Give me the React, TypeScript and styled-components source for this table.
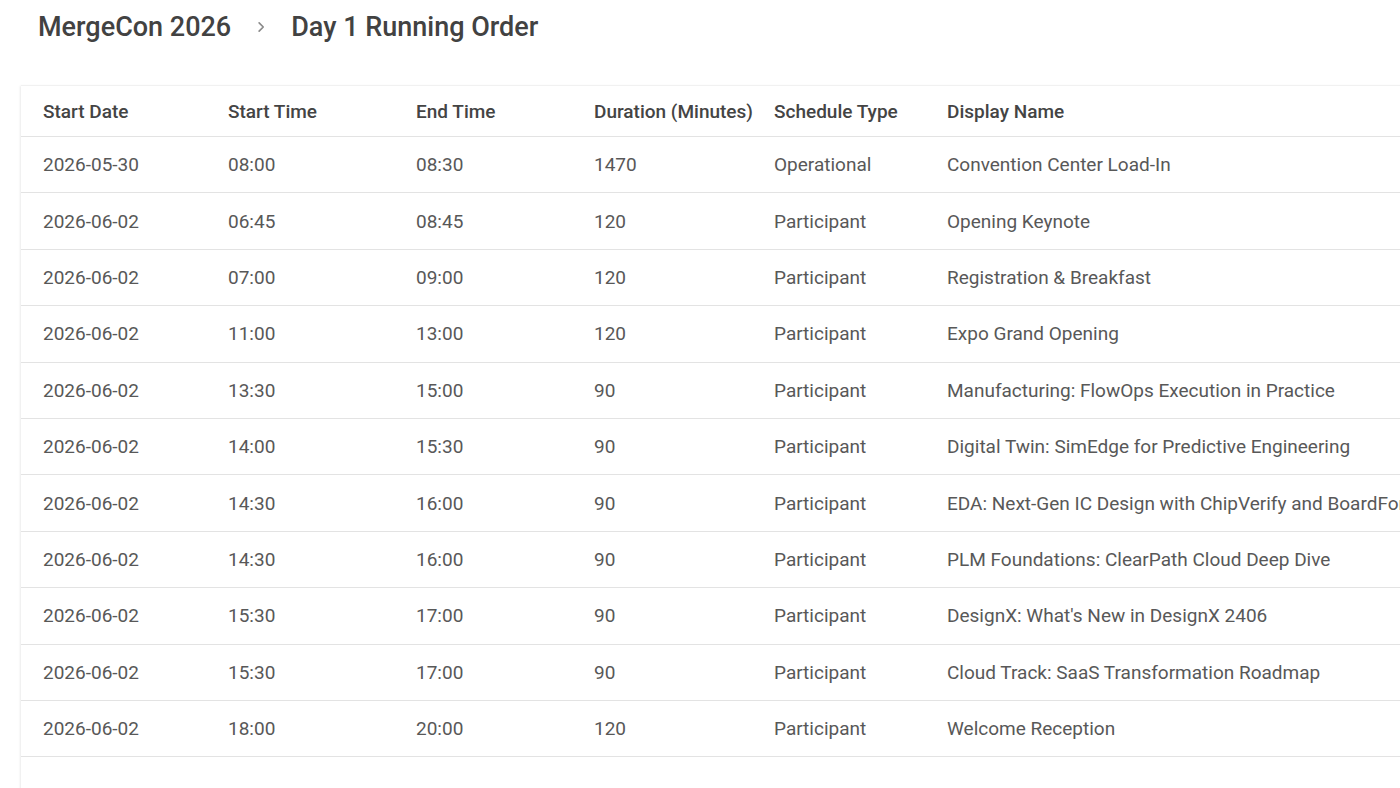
import React from "react";
import styled, { createGlobalStyle } from "styled-components";

const GlobalStyle = createGlobalStyle`
  html, body { margin: 0; padding: 0; background: #ffffff; overflow: hidden; }
  body { font-family: Roboto, "Noto Sans", Arial, sans-serif; }
`;

const Page = styled.div`
  width: 1400px;
  height: 788px;
  overflow: hidden;
  background: #ffffff;
`;

const Breadcrumbs = styled.nav`
  display: flex;
  align-items: center;
  height: 54px;
  padding-left: 38px;
  color: #424242;
  font-size: 27px;
  font-weight: 500;
`;

const Crumb = styled.span`
  letter-spacing: 0;
`;

const Sep = styled.span`
  display: inline-flex;
  width: 60px;
  justify-content: center;
  color: #8a8a8a;
  svg { display: block; }
`;

const Card = styled.div`
  margin: 32px 0 0 21px;
  width: 1500px;
  background: #fff;
  box-shadow: -1px 0 2px rgba(0, 0, 0, 0.08), 0 -1px 1px rgba(0, 0, 0, 0.03);
`;

const Table = styled.table`
  border-collapse: collapse;
  table-layout: fixed;
  width: 100%;
`;

const HeadCell = styled.th`
  height: 50px;
  padding: 0 0 0 22px;
  text-align: left;
  font-size: 19px;
  font-weight: 500;
  color: #444444;
  border-bottom: 1px solid #e3e3e3;
  white-space: nowrap;
`;

const Row = styled.tr`
  height: 56.4px;
`;

const Cell = styled.td`
  padding: 0 0 0 22px;
  font-size: 19px;
  font-weight: 400;
  color: #585858;
  border-bottom: 1px solid #e3e3e3;
  white-space: nowrap;
`;

const Footer = styled.div`
  height: 40px;
`;

const columns = [
  { label: "Start Date", width: 185 },
  { label: "Start Time", width: 188 },
  { label: "End Time", width: 178 },
  { label: "Duration (Minutes)", width: 180 },
  { label: "Schedule Type", width: 173 },
  { label: "Display Name", width: 596 },
];

const rows: string[][] = [
  ["2026-05-30", "08:00", "08:30", "1470", "Operational", "Convention Center Load-In"],
  ["2026-06-02", "06:45", "08:45", "120", "Participant", "Opening Keynote"],
  ["2026-06-02", "07:00", "09:00", "120", "Participant", "Registration & Breakfast"],
  ["2026-06-02", "11:00", "13:00", "120", "Participant", "Expo Grand Opening"],
  ["2026-06-02", "13:30", "15:00", "90", "Participant", "Manufacturing: FlowOps Execution in Practice"],
  ["2026-06-02", "14:00", "15:30", "90", "Participant", "Digital Twin: SimEdge for Predictive Engineering"],
  ["2026-06-02", "14:30", "16:00", "90", "Participant", "EDA: Next-Gen IC Design with ChipVerify and BoardForge"],
  ["2026-06-02", "14:30", "16:00", "90", "Participant", "PLM Foundations: ClearPath Cloud Deep Dive"],
  ["2026-06-02", "15:30", "17:00", "90", "Participant", "DesignX: What's New in DesignX 2406"],
  ["2026-06-02", "15:30", "17:00", "90", "Participant", "Cloud Track: SaaS Transformation Roadmap"],
  ["2026-06-02", "18:00", "20:00", "120", "Participant", "Welcome Reception"],
];

export default function App() {
  return (
    <Page>
      <GlobalStyle />
      <Breadcrumbs>
        <Crumb>MergeCon 2026</Crumb>
        <Sep>
          <svg width="18" height="18" viewBox="0 0 24 24" fill="none" stroke="currentColor" strokeWidth="2.2" strokeLinecap="round" strokeLinejoin="round">
            <path d="M9.5 6.5l5.5 5.5-5.5 5.5" />
          </svg>
        </Sep>
        <Crumb>Day 1 Running Order</Crumb>
      </Breadcrumbs>
      <Card>
        <Table>
          <colgroup>
            {columns.map((c) => (
              <col key={c.label} style={{ width: c.width }} />
            ))}
          </colgroup>
          <thead>
            <tr>
              {columns.map((c) => (
                <HeadCell key={c.label}>{c.label}</HeadCell>
              ))}
            </tr>
          </thead>
          <tbody>
            {rows.map((r, i) => (
              <Row key={i}>
                {r.map((v, j) => (
                  <Cell key={j}>{v}</Cell>
                ))}
              </Row>
            ))}
          </tbody>
        </Table>
        <Footer />
      </Card>
    </Page>
  );
}
